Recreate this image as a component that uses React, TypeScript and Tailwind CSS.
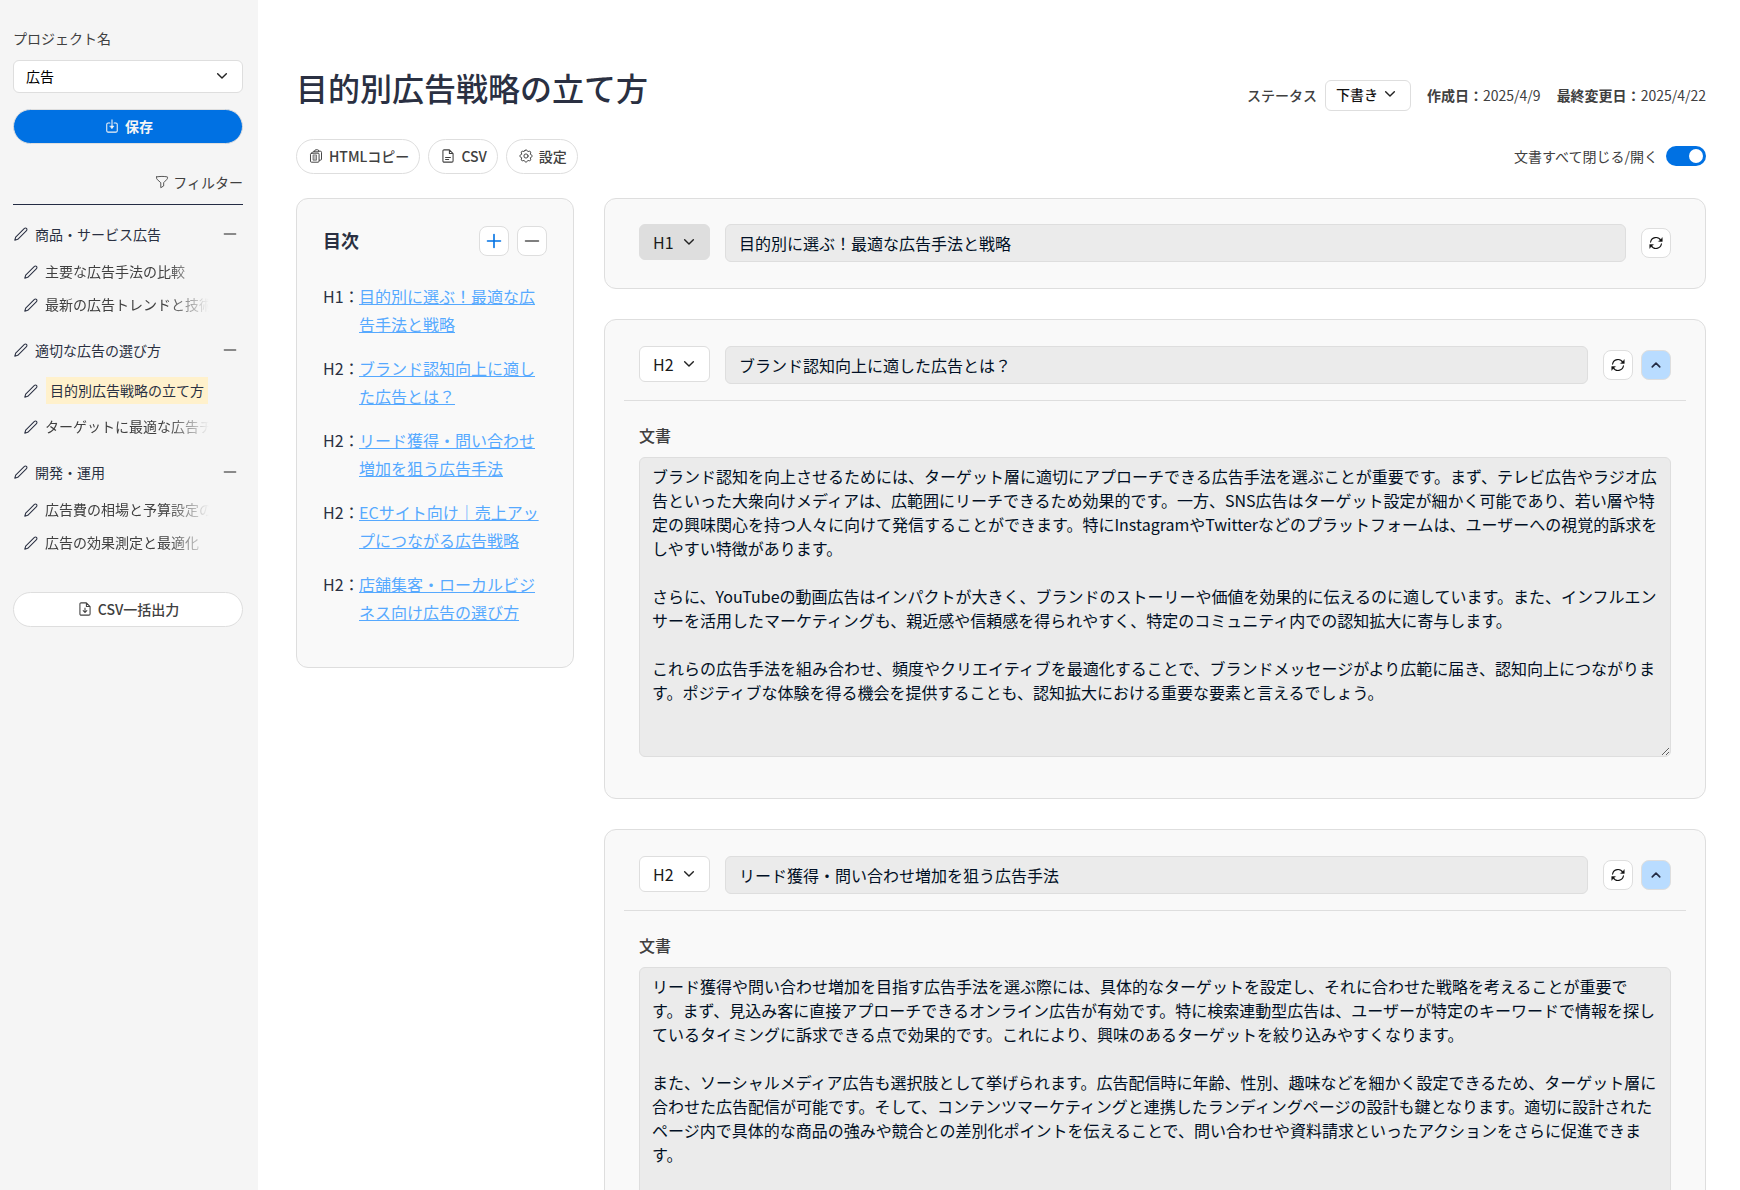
import { useState, type ReactNode } from "react";

type IconProps = { className?: string };

function Svg({
  className = "size-4",
  stroke = "1",
  box = "0 0 16 16",
  children,
}: {
  className?: string;
  stroke?: string;
  box?: string;
  children: ReactNode;
}) {
  return (
    <svg
      className={`shrink-0 ${className}`}
      viewBox={box}
      fill="none"
      stroke="currentColor"
      strokeWidth={stroke}
      strokeLinecap="round"
      strokeLinejoin="round"
      aria-hidden="true"
    >
      {children}
    </svg>
  );
}

const PencilIcon = ({ className }: IconProps) => (
  <Svg className={className} stroke="1.2">
    <path d="M.9 15.100L1.900 11.700 11.900 1.700a1.630 1.630 0 0 1 2.400 2.400L4.300 14.100z" />
  </Svg>
);

const SaveIcon = ({ className }: IconProps) => (
  <Svg className={className} stroke="1.2">
    <path d="M5.6 4.6H3.6A1.6 1.6 0 0 0 2 6.200v7.200A1.600 1.600 0 0 0 3.600 15h8.800a1.600 1.600 0 0 0 1.600-1.600V6.200a1.600 1.600 0 0 0-1.600-1.600h-2" />
    <path d="M8 1v9.200" />
    <path d="M5.600 8h4.800L8 10.800z" fill="currentColor" strokeWidth="0.500" />
  </Svg>
);

const FunnelIcon = ({ className }: IconProps) => (
  <Svg className={className}>
    <path d="M1.800 2.200c3.600-.8 8.800-.8 12.400 0 .4 1.200 0 2.200-.9 3.100L9.900 8.800v3.700l-3.300 2V8.800L2.700 5.300c-.9-.9-1.300-1.900-.9-3.100z" />
  </Svg>
);

const FileDownIcon = ({ className }: IconProps) => (
  <Svg className={className} stroke="1.2" box="1.500 0 13 16">
    <path d="M9.600 1H3.600A1.400 1.400 0 0 0 2.200 2.400v11.200A1.400 1.400 0 0 0 3.600 15h8.800a1.400 1.400 0 0 0 1.400-1.400V5.200zM9.600 1v4.200h4.200" />
    <path d="M8 7v5M5.900 9.900L8 12l2.100-2.100" />
  </Svg>
);

const FileTextIcon = ({ className }: IconProps) => (
  <Svg className={className} stroke="1.2">
    <path d="M9.600 1H3.600A1.400 1.400 0 0 0 2.200 2.400v11.200A1.400 1.400 0 0 0 3.600 15h8.800a1.400 1.400 0 0 0 1.400-1.400V5.200zM9.600 1v4.200h4.200" />
    <path d="M5.200 9.700h5.600M5.200 11.900h3.600" />
  </Svg>
);

const ClipboardIcon = ({ className }: IconProps) => (
  <Svg className={className} stroke="1.1">
    <path d="M6.300 2.500H5.700a1.300 1.300 0 0 0-1.300 1.300v.8M11.300 2.500h1.700a1.300 1.300 0 0 1 1.300 1.300v7.700a1.300 1.300 0 0 1-1.300 1.300h-1.100" />
    <path d="M6.500 2.200A1.300 1.300 0 0 1 7.800.9h2a1.300 1.300 0 0 1 1.300 1.300v1H6.500z" />
    <rect x="1.700" y="4.800" width="9.800" height="10.300" rx="1.200" />
    <path d="M4.600 7.200v5.600h4V7.200z" fill="currentColor" fillOpacity="0.350" strokeWidth="0.700" />
  </Svg>
);

const GearIcon = ({ className }: IconProps) => (
  <Svg className={className} stroke="1.1">
    <path d="M6.700 1.900c.4-1.400 2.200-1.400 2.600 0a1.400 1.400 0 0 0 2 .8c1.300-.7 2.600.6 1.900 1.900a1.400 1.400 0 0 0 .9 2.100c1.400.4 1.400 2.200 0 2.600a1.400 1.400 0 0 0-.9 2.100c.7 1.300-.6 2.600-1.900 1.900a1.400 1.400 0 0 0-2 .8c-.4 1.400-2.200 1.400-2.600 0a1.400 1.400 0 0 0-2-.8c-1.300.7-2.600-.6-1.900-1.900a1.400 1.400 0 0 0-.9-2.100c-1.400-.4-1.400-2.200 0-2.600a1.400 1.400 0 0 0 .9-2.100c-.7-1.300.6-2.600 1.900-1.900a1.400 1.400 0 0 0 2-.8z" />
    <circle cx="8" cy="8" r="2.400" />
  </Svg>
);

const RefreshIcon = ({ className }: IconProps) => (
  <Svg className={className} stroke="1.200">
    <path d="M1.800 7A6.300 6.300 0 0 1 13.500 5" />
    <path d="M14.200 9A6.300 6.300 0 0 1 2.500 11" />
    <path d="M15.200 2.200v4h-4zM.8 13.800v-4h4z" fill="currentColor" strokeWidth="0.500" />
  </Svg>
);

const ChevronDown = ({ className }: IconProps) => (
  <Svg className={className} stroke="1.900">
    <path d="M2.200 5L8 10.800 13.800 5" />
  </Svg>
);

const ChevronUp = ({ className }: IconProps) => (
  <Svg className={className} stroke="2.200">
    <path d="M3 10.500l5-5 5 5" />
  </Svg>
);

const MinusIcon = ({ className }: IconProps) => (
  <Svg className={className} stroke="1.500">
    <path d="M1.500 8h13" />
  </Svg>
);

const PlusIcon = ({ className }: IconProps) => (
  <Svg className={className} stroke="1.600">
    <path d="M1.500 8h13M8 1.500v13" />
  </Svg>
);

const groups = [
  { title: "商品・サービス広告", items: ["主要な広告手法の比較", "最新の広告トレンドと技術"] },
  { title: "適切な広告の選び方", items: ["目的別広告戦略の立て方", "ターゲットに最適な広告チ"] },
  { title: "開発・運用", items: ["広告費の相場と予算設定の", "広告の効果測定と最適化"] },
];

const current = "目的別広告戦略の立て方";

const toc = [
  { level: "H1", text: "目的別に選ぶ！最適な広告手法と戦略" },
  { level: "H2", text: "ブランド認知向上に適した広告とは？" },
  { level: "H2", text: "リード獲得・問い合わせ増加を狙う広告手法" },
  { level: "H2", text: "ECサイト向け｜売上アップにつながる広告戦略" },
  { level: "H2", text: "店舗集客・ローカルビジネス向け広告の選び方" },
];

const sections = [
  {
    title: "ブランド認知向上に適した広告とは？",
    body: `ブランド認知を向上させるためには、ターゲット層に適切にアプローチできる広告手法を選ぶことが重要です。まず、テレビ広告やラジオ広告といった大衆向けメディアは、広範囲にリーチできるため効果的です。一方、SNS広告はターゲット設定が細かく可能であり、若い層や特定の興味関心を持つ人々に向けて発信することができます。特にInstagramやTwitterなどのプラットフォームは、ユーザーへの視覚的訴求をしやすい特徴があります。

さらに、YouTubeの動画広告はインパクトが大きく、ブランドのストーリーや価値を効果的に伝えるのに適しています。また、インフルエンサーを活用したマーケティングも、親近感や信頼感を得られやすく、特定のコミュニティ内での認知拡大に寄与します。

これらの広告手法を組み合わせ、頻度やクリエイティブを最適化することで、ブランドメッセージがより広範に届き、認知向上につながります。ポジティブな体験を得る機会を提供することも、認知拡大における重要な要素と言えるでしょう。`,
  },
  {
    title: "リード獲得・問い合わせ増加を狙う広告手法",
    body: `リード獲得や問い合わせ増加を目指す広告手法を選ぶ際には、具体的なターゲットを設定し、それに合わせた戦略を考えることが重要で
す。まず、見込み客に直接アプローチできるオンライン広告が有効です。特に検索連動型広告は、ユーザーが特定のキーワードで情報を探しているタイミングに訴求できる点で効果的です。これにより、興味のあるターゲットを絞り込みやすくなります。

また、ソーシャルメディア広告も選択肢として挙げられます。広告配信時に年齢、性別、趣味などを細かく設定できるため、ターゲット層に合わせた広告配信が可能です。そして、コンテンツマーケティングと連携したランディングページの設計も鍵となります。適切に設計されたページ内で具体的な商品の強みや競合との差別化ポイントを伝えることで、問い合わせや資料請求といったアクションをさらに促進できます。`,
  },
];

function Sidebar() {
  return (
    <aside className="w-[258px] shrink-0 bg-[#f5f5f5] pt-[26px] pr-[15px] pl-[13px] text-sm">
      <label htmlFor="project" className="block h-6 leading-6">
        プロジェクト名
      </label>
      <div className="relative mt-2.5">
        <select
          id="project"
          className="h-[33px] w-full appearance-none rounded-md border border-[#dedede] bg-white px-3 pb-0.5 text-black"
        >
          <option>広告</option>
        </select>
        <ChevronDown className="pointer-events-none absolute top-2.5 right-[15px] size-3 text-[#222]" />
      </div>
      <button className="mt-4 flex h-[35px] w-full items-center justify-center gap-1.5 rounded-full border border-[#dedede] bg-[#0071e3] pb-0.5 pl-0.5 font-bold text-[#f5f5f5]">
        <SaveIcon className="size-3.5" />
        保存
      </button>
      <div className="mt-[23px] flex h-[38px] items-start justify-end border-b border-[#242c44]">
        <button className="flex items-center gap-1 leading-[30px]">
          <FunnelIcon className="size-3.5" />
          フィルター
        </button>
      </div>
      <nav className="mt-[15px] flex flex-col gap-[15px]">
        {groups.map((group) => (
          <section key={group.title}>
            <div className="flex h-7 items-center justify-between pr-1.5">
              <span className="flex items-center gap-[7px] pl-px text-[#2a3042]">
                <PencilIcon className="size-3.5" />
                {group.title}
              </span>
              <button aria-label="閉じる" className="text-[#666]">
                <MinusIcon className="size-3.5" />
              </button>
            </div>
            <ul className="mt-[7px] flex flex-col pl-[11px]">
              {group.items.map((item) => (
                <li key={item} className="flex items-center gap-[7px]">
                  <PencilIcon className="size-3.5 text-[#2a3042]" />
                  {item === current ? (
                    <a href="#" className="my-1.5 ml-px bg-[#fff1cc] px-1 leading-[27px] whitespace-nowrap text-[#2a3042]">
                      {item}
                    </a>
                  ) : (
                    <a
                      href="#"
                      className="w-[164px] overflow-hidden mask-r-from-75% mask-r-to-100% leading-[33px] whitespace-nowrap"
                    >
                      {item}
                    </a>
                  )}
                </li>
              ))}
            </ul>
          </section>
        ))}
      </nav>
      <button className="mt-[33px] flex h-[35px] w-full items-center justify-center gap-[7px] rounded-full border border-[#dedede] bg-white pb-0.5 pl-0.5 font-medium">
        <FileDownIcon className="h-3.5 w-3" />
        CSV一括出力
      </button>
    </aside>
  );
}

function PillButton({ icon, children }: { icon: ReactNode; children: ReactNode }) {
  return (
    <button className="flex h-[35px] items-center gap-1.5 rounded-full border border-[#dedede] bg-white pr-2.5 pb-0.5 pl-3 text-sm font-medium whitespace-nowrap">
      {icon}
      {children}
    </button>
  );
}

function SquareButton({ label, className, children }: { label: string; className: string; children: ReactNode }) {
  return (
    <button
      aria-label={label}
      className={`flex size-[30px] shrink-0 items-center justify-center rounded-lg border border-[#dedede] ${className}`}
    >
      {children}
    </button>
  );
}

function HeadingRow({ level, title }: { level: "H1" | "H2"; title: string }) {
  const locked = level === "H1";
  return (
    <div className="flex items-start px-[15px]">
      <div className="relative shrink-0">
        <select
          aria-label="見出しレベル"
          disabled={locked}
          className={`h-9 w-[71px] appearance-none rounded-md border border-[#dedede] px-[13px] text-base text-[#1a1a1a] opacity-100 ${
            locked ? "bg-[#dedede]" : "bg-white"
          }`}
        >
          <option>{level}</option>
        </select>
        <ChevronDown className="pointer-events-none absolute top-3 right-[15px] size-3 text-[#222]" />
      </div>
      <input
        aria-label="見出し"
        readOnly
        value={title}
        className="ml-[15px] h-[38px] min-w-0 flex-1 rounded-md border border-[#dedede] bg-[#ebebeb] px-[13px] text-base text-[#000f24] outline-none"
      />
      <div className="mt-1 ml-[15px] flex gap-2">
        <SquareButton label="再生成" className="bg-white text-[#111]">
          <RefreshIcon className="size-3.5" />
        </SquareButton>
        {!locked && (
          <SquareButton label="閉じる" className="bg-[#b9dcff] text-[#242c44]">
            <ChevronUp className="size-3" />
          </SquareButton>
        )}
      </div>
    </div>
  );
}

export default function App() {
  const [open, setOpen] = useState(true);
  return (
    <div
      lang="ja"
      className="flex min-h-screen bg-white font-['Noto_Sans_CJK_JP','Noto_Sans',sans-serif] text-[#404040]"
    >
      <Sidebar />
      <main className="min-w-0 flex-1 pt-[63px] pr-[34px] pb-8 pl-[38px]">
        <header className="flex items-center justify-between">
          <h1 className="text-[32px] leading-[48px] font-medium text-[#2a3042]">目的別広告戦略の立て方</h1>
          <div className="mt-4 flex items-center gap-4 text-sm">
            <div className="flex items-center gap-2">
              <label htmlFor="status" className="font-medium">
                ステータス
              </label>
              <div className="relative">
                <select
                  id="status"
                  className="h-[31px] w-[86px] appearance-none rounded-md border border-[#dedede] bg-white px-2.5 pb-0.5 font-medium text-[#111]"
                >
                  <option>下書き</option>
                </select>
                <ChevronDown className="pointer-events-none absolute top-2 right-[15px] size-3 text-[#222]" />
              </div>
            </div>
            <p>
              <strong>作成日：</strong>2025/4/9
            </p>
            <p>
              <strong>最終変更日：</strong>2025/4/22
            </p>
          </div>
        </header>

        <div className="mt-7 flex items-center justify-between">
          <div className="flex gap-2">
            <PillButton icon={<ClipboardIcon className="size-3.5" />}>HTMLコピー</PillButton>
            <PillButton icon={<FileTextIcon className="size-3.5" />}>CSV</PillButton>
            <PillButton icon={<GearIcon className="size-3.5" />}>設定</PillButton>
          </div>
          <label className="flex items-center gap-2 pb-0.5 text-sm">
            文書すべて閉じる/開く
            <input
              type="checkbox"
              role="switch"
              checked={open}
              onChange={() => setOpen(!open)}
              className="flex h-5 w-10 appearance-none items-center rounded-full bg-[#bbb] px-[3px] before:size-3.5 before:rounded-full before:bg-white checked:justify-end checked:bg-[#0071e3]"
            />
          </label>
        </div>

        <div className="mt-6 flex items-start gap-[30px]">
          <nav className="w-[278px] shrink-0 rounded-xl border border-[#dedede] bg-[#f9f9f9] pt-[27px] pr-[26px] pb-[41px] pl-[26px]">
            <div className="flex items-center gap-2">
              <h2 className="flex-1 pb-0.5 text-lg leading-7 font-bold text-[#2a3042]">目次</h2>
              <SquareButton label="すべて開く" className="bg-white text-[#0071e3]">
                <PlusIcon className="size-4" />
              </SquareButton>
              <SquareButton label="すべて閉じる" className="bg-white text-[#555]">
                <MinusIcon className="size-4" />
              </SquareButton>
            </div>
            <ul className="mt-[26px] flex flex-col gap-4 leading-7">
              {toc.map((entry) => (
                <li key={entry.text} className="flex">
                  <span className="w-9 shrink-0 whitespace-nowrap text-[#2a3042]">{entry.level}：</span>
                  <a href="#" className="text-[#56a9ff] underline">
                    {entry.text}
                  </a>
                </li>
              ))}
            </ul>
          </nav>

          <div className="flex min-w-0 flex-1 flex-col gap-[30px]">
            <section className="rounded-xl border border-[#dedede] bg-[#f9f9f9] px-[19px] pt-[25px] pb-[26px]">
              <HeadingRow level="H1" title="目的別に選ぶ！最適な広告手法と戦略" />
            </section>
            {sections.map((section, index) => (
              <section
                key={section.title}
                className="rounded-xl border border-[#dedede] bg-[#f9f9f9] px-[19px] pt-[26px] pb-[41px]"
              >
                <HeadingRow level="H2" title={section.title} />
                {open && (
                  <div className="mt-4 border-t border-[#dedede] px-[15px] pt-[22px]">
                    <label htmlFor={`body-${index}`} className="block h-[34px] leading-6 font-medium">
                      文書
                    </label>
                    <textarea
                      id={`body-${index}`}
                      readOnly
                      value={section.body}
                      className="block h-[300px] w-full resize-y rounded-md border border-[#dedede] bg-[#ebebeb] px-3 py-1.5 text-base leading-6 text-[#000f24] outline-none"
                    />
                  </div>
                )}
              </section>
            ))}
          </div>
        </div>
      </main>
    </div>
  );
}
